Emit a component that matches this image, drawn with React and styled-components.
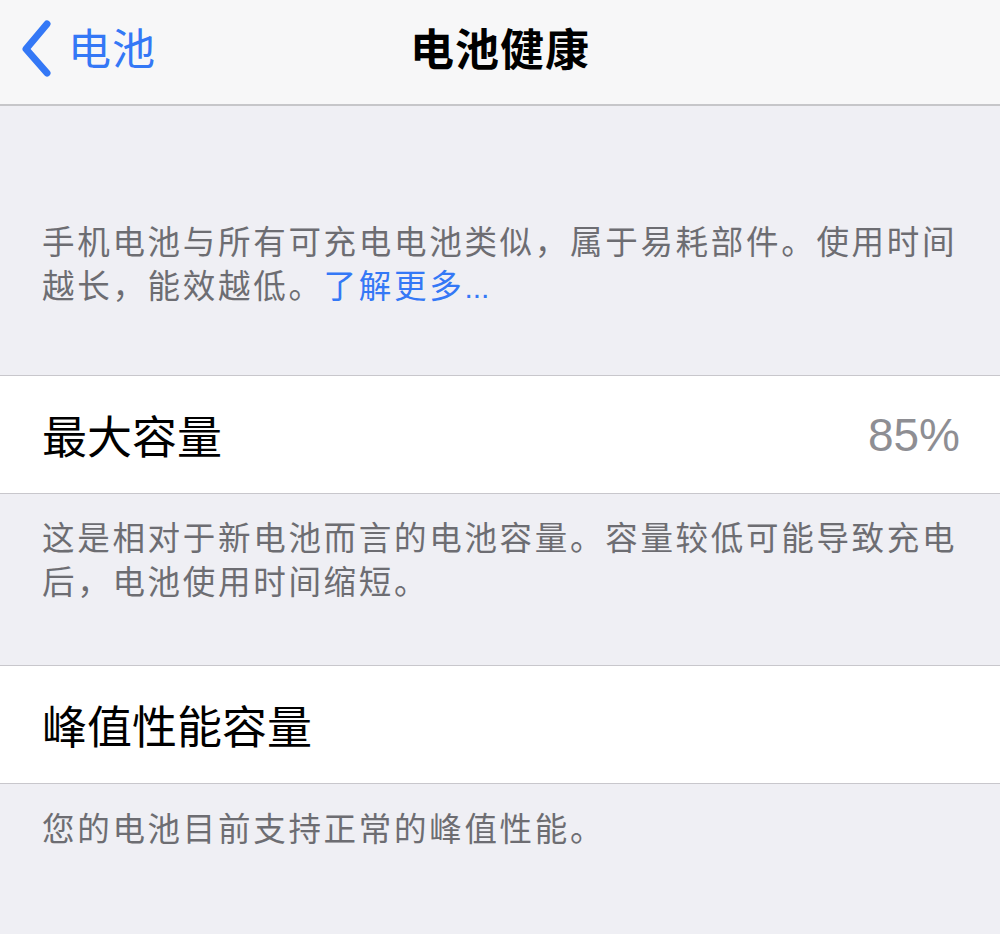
import React from "react";
import styled, { createGlobalStyle } from "styled-components";

const GlobalStyle = createGlobalStyle`
  html, body {
    margin: 0;
    padding: 0;
    background: #efeff4;
  }
  body {
    font-family: "Noto Sans CJK SC", "Liberation Sans", sans-serif;
  }
`;

export default function App() {
  return (
    <>
      <GlobalStyle />
      <Page>
        <NavBar>
          <BackButton>
            <svg width="34" height="60" viewBox="0 0 34 60">
              <path
                d="M28 6 L7 31 L28 55"
                fill="none"
                stroke="#3478f6"
                strokeWidth="7"
                strokeLinecap="round"
                strokeLinejoin="round"
              />
            </svg>
            <span>电池</span>
          </BackButton>
          <Title>电池健康</Title>
        </NavBar>

        <GroupText $top={112} $bottom={69}>
          手机电池与所有可充电电池类似，属于易耗部件。使用时间越长，能效越低。
          <Link>
            了解更多<Dots>...</Dots>
          </Link>
        </GroupText>

        <Cell>
          <CellLabel>最大容量</CellLabel>
          <CellValue>85%</CellValue>
        </Cell>

        <GroupText $top={20} $bottom={63}>
          这是相对于新电池而言的电池容量。容量较低可能导致充电后，电池使用时间缩短。
        </GroupText>

        <Cell>
          <CellLabel>峰值性能容量</CellLabel>
        </Cell>

        <GroupText $top={21} $bottom={60}>
          您的电池目前支持正常的峰值性能。
        </GroupText>
      </Page>
    </>
  );
}

const Page = styled.div`
  width: 1000px;
  min-height: 934px;
  background: #efeff4;
`;

const NavBar = styled.div`
  position: relative;
  height: 104px;
  background: #f7f7f8;
  border-bottom: 2px solid #c6c6c9;
  display: flex;
  align-items: center;
  justify-content: center;
  box-sizing: content-box;
`;

const BackButton = styled.div`
  position: absolute;
  left: 19px;
  top: 18px;
  display: flex;
  align-items: center;
  gap: 15px;
  color: #3478f6;
  font-size: 43px;
  line-height: 60px;
  letter-spacing: 1px;
  & span {
    margin-top: -4px;
  }
`;

const Title = styled.div`
  font-size: 44px;
  font-weight: 700;
  color: #000;
  margin-top: -10px;
  letter-spacing: 1px;
`;

const GroupText = styled.div`
  padding: ${(p) => p.$top}px 42px ${(p) => p.$bottom}px 42px;
  font-size: 32.5px;
  letter-spacing: 2.7px;
  line-height: 44px;
  color: #6d6d72;
`;

const Link = styled.span`
  color: #3478f6;
  line-height: 44px;
`;

const Dots = styled.span`
  font-family: "Liberation Sans", sans-serif;
  letter-spacing: 0;
  font-size: 30px;
  line-height: 30px;
`;

const Cell = styled.div`
  height: 117px;
  background: #fff;
  border-top: 1px solid #c8c7cc;
  border-bottom: 1px solid #c8c7cc;
  display: flex;
  align-items: center;
  justify-content: space-between;
  padding: 0 40px 0 42px;
`;

const CellLabel = styled.div`
  font-size: 45px;
  color: #000;
`;

const CellValue = styled.div`
  font-family: "Liberation Sans", sans-serif;
  font-size: 46px;
  color: #8e8e93;
`;
